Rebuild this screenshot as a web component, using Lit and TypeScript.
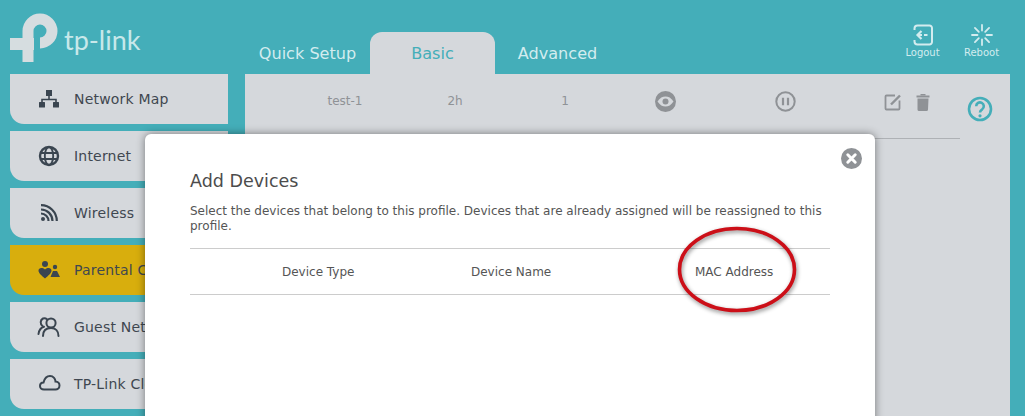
import { LitElement, html, css, svg } from "lit";
import { customElement } from "lit/decorators.js";

const ICONS = {
  map: svg`<rect x="9" y="3" width="6" height="6" fill="currentColor"/><path d="M12 9v3.500M5 16v-3.500h14V16" fill="none" stroke="currentColor" stroke-width="1.600"/><rect x="2" y="15" width="6" height="5.500" rx=".6" fill="currentColor"/><rect x="16" y="15" width="6" height="5.500" rx=".6" fill="currentColor"/>`,
  globe: svg`<g fill="none" stroke="currentColor"><circle cx="12" cy="12" r="9" stroke-width="2.400"/><ellipse cx="12" cy="12" rx="4.200" ry="9" stroke-width="1.900"/><path d="M3.500 9h17M3.500 15h17" stroke-width="1.900"/></g>`,
  wifi: svg`<g fill="none" stroke="currentColor" stroke-width="2.200"><path d="M4 12.500a7.500 7.500 0 0 1 7.500 7.500"/><path d="M4 8.500a11.500 11.500 0 0 1 11.500 11.500"/><path d="M4 4.200a15.800 15.800 0 0 1 15.800 15.800"/></g><circle cx="6" cy="18" r="2" fill="currentColor"/>`,
  family: svg`<g fill="currentColor"><circle cx="8" cy="6" r="3"/><path d="M8 20.500C4 17 1.500 15 1.500 12.500 1.500 10 5 9 8 11.500 11 9 14.500 10 14.500 12.500 14.500 15 12 17 8 20.500Z"/><circle cx="18" cy="9" r="2.200"/><path d="M13.500 19 16 13h4l3 6Z"/></g>`,
  guest: svg`<g fill="none" stroke="currentColor" stroke-width="2" stroke-linecap="round"><circle cx="14" cy="8" r="4.600"/><path d="M10 4.200A4.300 4.300 0 0 0 6 3.500 4.400 4.400 0 0 0 5.600 11"/><path d="M6 21c0-5.500 3.500-8 8-8s7.500 3 7.500 8"/><path d="M1.500 19c.5-4 2.500-6.500 5.500-7.300"/></g>`,
  cloud: svg`<path d="M7 17.500C4.500 17.500 3 15.800 3 14c0-2 1.500-3.500 3.500-3.500C7.500 6.500 10 4 13 4c3.500 0 5.500 3 5.500 5.500 2.500 0 4 2 4 4 0 2.500-2 4-4 4Z" fill="none" stroke="currentColor" stroke-width="2"/>`,
};

const MENU: { label: string; icon: keyof typeof ICONS; active?: boolean }[] = [
  { label: "Network Map", icon: "map" },
  { label: "Internet", icon: "globe" },
  { label: "Wireless", icon: "wifi" },
  { label: "Parental Controls", icon: "family", active: true },
  { label: "Guest Network", icon: "guest" },
  { label: "TP-Link Cloud", icon: "cloud" },
];

const SPOKES = [0, 45, 90, 135, 180, 225, 270, 315];

@customElement("app-root")
export class AppRoot extends LitElement {
  static styles = css`
    :host {
      display: block;
      position: relative;
      width: 1025px;
      height: 416px;
      overflow: hidden;
      background: #44aeb9;
      font-family: "DejaVu Sans", Verdana, sans-serif;
      color: #3f4750;
    }
    .header { display: flex; height: 74px; }
    .brand { display: flex; width: 245px; flex: none; }
    .logo { width: 60px; height: 66px; flex: none; margin-top: 4px; display: block; }
    .wordmark {
      font-family: "Lato", sans-serif;
      font-size: 27px;
      line-height: 30px;
      color: #c8e8ea;
      margin: 25px 0 0 4px;
    }
    .tabs { display: flex; align-items: flex-end; }
    .tab {
      width: 125px;
      height: 42px;
      box-sizing: border-box;
      padding-top: 12px;
      text-align: center;
      font-size: 16.100px;
      line-height: 20px;
      color: #d3ecef;
      border-radius: 12px 12px 0 0;
    }
    .tab.active { background: #d5d8dc; color: #44aeb9; }
    .actions { margin-left: auto; display: flex; padding: 23px 14px 0 0; }
    .action {
      width: 59px;
      display: flex;
      flex-direction: column;
      align-items: center;
      font-size: 10px;
      line-height: 12px;
      color: #d3ecef;
    }
    .action svg { width: 24px; height: 24px; display: block; }
    .main { display: flex; height: 342px; }
    .side {
      width: 218px;
      margin-left: 10px;
      display: flex;
      flex-direction: column;
      gap: 7px;
      flex: none;
    }
    .item {
      height: 50px;
      flex: none;
      display: flex;
      align-items: center;
      gap: 13px;
      padding-left: 27px;
      background: #d5d8dc;
      border-radius: 0 0 0 14px;
      font-size: 14px;
      letter-spacing: 0.2px;
      white-space: nowrap;
      overflow: hidden;
    }
    .item.active { background: #d8ae0d; }
    .item svg { width: 24px; height: 24px; flex: none; color: #3a4550; }
    .panel {
      margin-left: 17px;
      width: 765px;
      flex: none;
      background: #d5d8dc;
      display: flex;
    }
    .table { width: 715px; flex: none; }
    .row {
      display: grid;
      grid-template-columns: 45px 110px 110px 110px 90px 150px 1fr;
      align-items: center;
      height: 54px;
      padding-bottom: 10px;
      border-bottom: 1px solid #aeb1b5;
      font-size: 12px;
      color: #8f9296;
      text-align: center;
    }
    .row svg { display: block; margin: 0 auto; color: #8f9296; }
    .tools { display: flex; align-items: center; gap: 14px; padding: 2px 0 0 24px; }
    .tools svg { margin: 0; }
    .help { flex: 1; padding: 22px 0 0 7px; }
    .help svg { display: block; width: 26px; height: 26px; }
    .modal {
      position: absolute;
      left: 145px;
      top: 134px;
      width: 730px;
      height: 300px;
      box-sizing: border-box;
      padding: 37px 45px 0;
      background: #fff;
      border-radius: 6px 6px 0 0;
      box-shadow: 0 0 9px rgba(0, 0, 0, 0.45);
      color: #555;
    }
    .close { position: absolute; left: 696px; top: 14px; width: 21px; height: 21px; }
    h2 {
      margin: 0;
      font-size: 17.500px;
      font-weight: 400;
      line-height: 20px;
      color: #4c4c4c;
    }
    p {
      margin: 13px 0 14px;
      font-size: 12px;
      line-height: 15px;
      color: #555;
    }
    .cols {
      display: grid;
      grid-template-columns: 189px 224px 1fr;
      align-items: center;
      height: 45px;
      padding-left: 92px;
      border-top: 1px solid #ccc;
      border-bottom: 1px solid #ccc;
      font-size: 12px;
      color: #555;
    }
    .ring {
      position: absolute;
      left: 527px;
      top: 88px;
      width: 130px;
      height: 96px;
      filter: drop-shadow(1px 2px 2px rgba(0, 0, 0, 0.45));
    }
  `;

  render() {
    return html`
      <div class="header">
        <div class="brand">
          <svg class="logo" viewBox="0 0 60 66">
            <path d="M28 58V27a12 12 0 1 1 12 12" fill="none" stroke="#d6dde0" stroke-width="11"/>
            <path d="M10 40H34" fill="none" stroke="#d6dde0" stroke-width="12"/>
          </svg>
          <div class="wordmark">tp-link</div>
        </div>
        <div class="tabs">
          <div class="tab">Quick Setup</div>
          <div class="tab active">Basic</div>
          <div class="tab">Advanced</div>
        </div>
        <div class="actions">
          <div class="action">
            <svg viewBox="0 0 24 24" fill="none" stroke="currentColor" stroke-width="2">
              <path d="M3.500 7V5.500a3 3 0 0 1 3-3h12a2.500 2.500 0 0 1 2.500 2.500v14a2.500 2.500 0 0 1-2.500 2.500h-12a3 3 0 0 1-3-3V17"/>
              <path d="M10.500 8 6.500 12l4 4" stroke-width="2.200"/>
              <path d="M7 12h4M13 12h3.500"/>
            </svg>
            <span>Logout</span>
          </div>
          <div class="action">
            <svg viewBox="0 0 24 24" fill="none" stroke="currentColor" stroke-width="1.800" stroke-linecap="round">
              ${SPOKES.map((a) => svg`<path d="M12 7.500V2" transform="rotate(${a} 12 12)"/>`)}
            </svg>
            <span>Reboot</span>
          </div>
        </div>
      </div>
      <div class="main">
        <div class="side">
          ${MENU.map(
            (m) => html`<div class="item ${m.active ? "active" : ""}">
              <svg viewBox="0 0 24 24">${ICONS[m.icon]}</svg>
              <span>${m.label}</span>
            </div>`
          )}
        </div>
        <div class="panel">
          <div class="table">
            <div class="row">
              <span></span>
              <span>test-1</span>
              <span>2h</span>
              <span>1</span>
              <svg width="21" height="21" viewBox="0 0 21 21">
                <circle cx="10.500" cy="10.500" r="10.500" fill="currentColor"/>
                <path d="M2.500 10.500C5 6.800 7.500 5.500 10.500 5.500s5.500 1.300 8 5c-2.500 3.700-5 5-8 5s-5.500-1.300-8-5Z" fill="#d5d8dc"/>
                <circle cx="10.500" cy="10.500" r="3" fill="currentColor"/>
              </svg>
              <svg width="21" height="21" viewBox="0 0 21 21">
                <circle cx="10.500" cy="10.500" r="9.200" fill="none" stroke="currentColor" stroke-width="2"/>
                <path d="M8 6.800v7.400M13 6.800v7.400" stroke="currentColor" stroke-width="2.200" fill="none"/>
              </svg>
              <div class="tools">
                <svg width="18" height="18" viewBox="0 0 18 18" fill="none" stroke="currentColor">
                  <path d="M11 2.500H2.500a1 1 0 0 0-1 1v12a1 1 0 0 0 1 1h12a1 1 0 0 0 1-1V7.500" stroke-width="1.800"/>
                  <path d="M7 11.500 16 2.500" stroke-width="2.400"/>
                </svg>
                <svg width="14" height="17" viewBox="0 0 14 17" fill="currentColor">
                  <rect x="4.500" y="0" width="5" height="1.500"/>
                  <rect x="0.500" y="1.500" width="13" height="2"/>
                  <path d="M1.500 4.500h11l-.5 11a1.500 1.500 0 0 1-1.500 1.500h-7.500a1.500 1.500 0 0 1-1.500-1.500Z"/>
                </svg>
              </div>
            </div>
          </div>
          <div class="help">
            <svg viewBox="0 0 26 26">
              <circle cx="13" cy="13" r="11" fill="none" stroke="#44aeb9" stroke-width="2.600"/>
              <path d="M9.200 10.200a3.800 3.800 0 1 1 6 3.100c-1.500 1-2.200 1.700-2.200 3.200" fill="none" stroke="#44aeb9" stroke-width="2.600"/>
              <circle cx="13" cy="19.800" r="1.600" fill="#44aeb9"/>
            </svg>
          </div>
        </div>
      </div>
      <div class="modal">
        <svg class="close" viewBox="0 0 21 21">
          <circle cx="10.500" cy="10.500" r="10.500" fill="#8f9296"/>
          <path d="M6.800 6.800l7.400 7.400M14.200 6.800l-7.400 7.400" stroke="#fff" stroke-width="3" stroke-linecap="round"/>
        </svg>
        <h2>Add Devices</h2>
        <p>Select the devices that belong to this profile. Devices that are already assigned will be reassigned to this profile.</p>
        <div class="cols">
          <span>Device Type</span>
          <span>Device Name</span>
          <span>MAC Address</span>
        </div>
        <svg class="ring" viewBox="0 0 130 96">
          <ellipse cx="65" cy="47.500" rx="57.500" ry="41" fill="none" stroke="#cc0f18" stroke-width="3.600"/>
        </svg>
      </div>
    `;
  }
}
